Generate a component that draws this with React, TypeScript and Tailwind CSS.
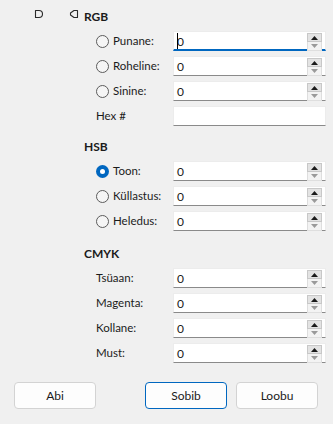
import React from 'react'

type Row = { label: string; radio?: boolean; checked?: boolean; value?: string; spin?: boolean; focused?: boolean }

function Radio({ checked }: { checked?: boolean }) {
  if (checked) {
    return (
      <span className="w-[13px] h-[13px] rounded-full bg-[#0067c0] flex items-center justify-center shrink-0">
        <span className="w-[5px] h-[5px] rounded-full bg-white" />
      </span>
    )
  }
  return <span className="w-[13px] h-[13px] rounded-full border border-[#5c5c5c] bg-[#f5f5f5] shrink-0" />
}

function Spin() {
  return (
    <div className="absolute right-[3px] top-[1px] flex flex-col w-[15px]">
      <div className="h-[9px] bg-[#e3e3e3] border border-[#c8c8c8] flex items-center justify-center">
        <svg width="7" height="4" viewBox="0 0 7 4"><path d="M0 4 L3.5 0 L7 4 Z" fill="#1a1a1a" /></svg>
      </div>
      <div className="h-[9px] bg-[#f3f3f3] border border-t-0 border-[#dedede] flex items-center justify-center">
        <svg width="7" height="4" viewBox="0 0 7 4"><path d="M0 0 L3.5 4 L7 0 Z" fill="#9a9a9a" /></svg>
      </div>
    </div>
  )
}

function Field({ row }: { row: Row }) {
  return (
    <div className="flex items-center h-[20px]">
      <div className="w-[77px] flex items-center gap-[4px]">
        {row.radio && <Radio checked={row.checked} />}
        <span className="text-[11.5px] text-[#1b1b1b] leading-none">{row.label}</span>
      </div>
      <div
        className={`relative w-[153px] h-[20px] bg-white border-t border-x border-[#ececec] ${
          row.focused ? 'border-b-2 border-b-[#0067c0]' : 'border-b border-b-[#8a8a8a]'
        }`}
      >
        {row.value !== undefined && (
          <span className="absolute left-[3px] top-[2px] text-[12px] leading-[15px] text-[#1b1b1b]">{row.value}</span>
        )}
        {row.focused && <span className="absolute left-[3px] top-[1px] w-px h-[16px] bg-black" />}
        {row.spin && <Spin />}
      </div>
    </div>
  )
}

function Section({ title, rows, className }: { title: string; rows: Row[]; className?: string }) {
  return (
    <div className={className}>
      <div className="h-[16px] text-[12px] font-bold text-[#1b1b1b] leading-[16px]">{title}</div>
      <div className="pl-[12px] flex flex-col gap-[5px] mt-[6px]">
        {rows.map((r) => (
          <Field key={r.label} row={r} />
        ))}
      </div>
    </div>
  )
}

function Btn({ label, primary }: { label: string; primary?: boolean }) {
  return (
    <button
      className={`w-[82px] h-[27px] rounded-[4px] bg-[#fdfdfd] text-[12px] text-[#1b1b1b] border ${
        primary ? 'border-[#0067c0]' : 'border-[#d3d3d3]'
      }`}
    >
      {label}
    </button>
  )
}

export default function App() {
  const rgb: Row[] = [
    { label: 'Punane:', radio: true, value: '0', spin: true, focused: true },
    { label: 'Roheline:', radio: true, value: '0', spin: true },
    { label: 'Sinine:', radio: true, value: '0', spin: true },
    { label: 'Hex #' },
  ]
  const hsb: Row[] = [
    { label: 'Toon:', radio: true, checked: true, value: '0', spin: true },
    { label: 'Küllastus:', radio: true, value: '0', spin: true },
    { label: 'Heledus:', radio: true, value: '0', spin: true },
  ]
  const cmyk: Row[] = [
    { label: 'Tsüaan:', value: '0', spin: true },
    { label: 'Magenta:', value: '0', spin: true },
    { label: 'Kollane:', value: '0', spin: true },
    { label: 'Must:', value: '0', spin: true },
  ]

  return (
    <div
      className="w-[333px] h-[424px] bg-[#f0f0f0] overflow-hidden"
      style={{ fontFamily: 'Lato, "Noto Sans", sans-serif' }}
    >
      <div className="flex pt-[9px]">
        <div className="w-[84px] flex items-start">
          <svg className="ml-[34px]" width="10" height="10" viewBox="0 0 10 10">
            <path d="M1.5 1.5 H5 Q8.5 1.5 8.5 5 Q8.5 8.5 5 8.5 H1.5 Z" fill="none" stroke="#2a2a2a" strokeWidth="1.1" strokeLinejoin="round" />
          </svg>
          <svg className="ml-[25px]" width="10" height="10" viewBox="0 0 10 10">
            <path d="M8.5 1.5 H5 L1.5 4 V6 L5 8.5 H8.5 Z" fill="none" stroke="#2a2a2a" strokeWidth="1.1" strokeLinejoin="round" />
          </svg>
        </div>
        <div className="flex flex-col">
          <Section title="RGB" rows={rgb} />
          <Section title="HSB" rows={hsb} className="mt-[13px]" />
          <Section title="CMYK" rows={cmyk} className="mt-[15px]" />
        </div>
      </div>
      <div className="flex mt-[19px] pl-[14px]">
        <Btn label="Abi" />
        <div className="ml-[49px] flex gap-[9px]">
          <Btn label="Sobib" primary />
          <Btn label="Loobu" />
        </div>
      </div>
    </div>
  )
}
